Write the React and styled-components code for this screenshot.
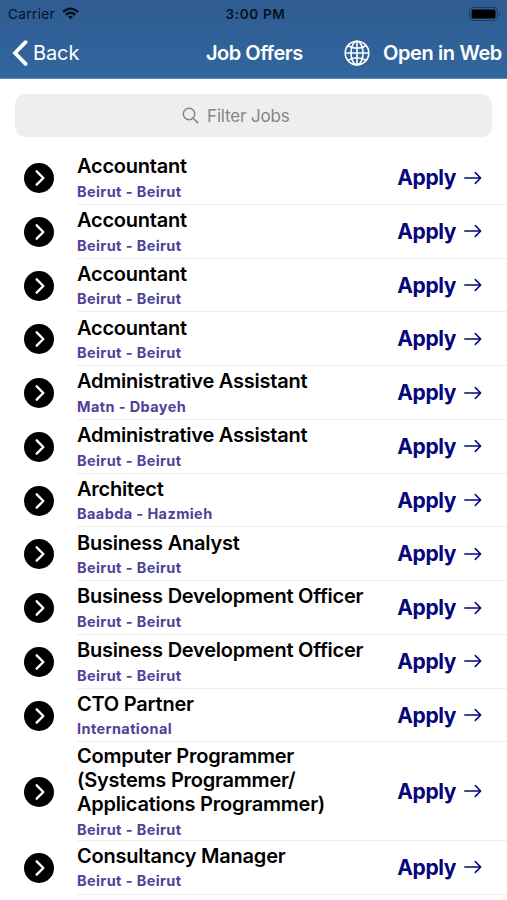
import React from 'react'
import styled, { createGlobalStyle } from 'styled-components'

const colors = {
    headerTop: '#2f5c91',
    headerBottom: '#31669f',
    navy: '#06067c',
    purple: '#50419a',
    searchGrey: '#eeeeee',
    textGrey: '#858587',
    line: '#ededee',
}

const GlobalStyle = createGlobalStyle`
    * {
        box-sizing: border-box;
    }

    body {
        margin: 0;
        overflow: hidden;
        background: #fff;
        font-family: Inter, 'Liberation Sans', sans-serif;
    }
`

const Screen = styled.div`
    width: 507px;
    height: 900px;
    overflow: hidden;
    background: #fff;
`

const HeaderComp = styled.header`
    height: 79px;
    background: linear-gradient(${colors.headerTop}, ${colors.headerBottom});
    border-bottom: 1px solid #5c8bb8;
`

const StatusBar = styled.div`
    display: grid;
    grid-template-columns: 1fr auto 1fr;
    align-items: center;
    height: 27px;
    padding: 0 6px 0 8px;
    color: #06101c;
    font-size: 13.5px;
`

const Carrier = styled.div`
    display: flex;
    align-items: center;
    gap: 7px;
    letter-spacing: 0.4px;
`

const Clock = styled.div`
    font-weight: 600;
    letter-spacing: 0.65px;
    padding-left: 2px;
`

const BatteryIcon = styled.svg`
    justify-self: end;
`

const NavBar = styled.nav`
    display: grid;
    grid-template-columns: 206px 1fr auto;
    align-items: center;
    height: 51px;
    padding-right: 5px;
    color: #fff;
    font-size: 20px;
`

const BackButton = styled.div`
    display: flex;
    align-items: center;
    gap: 5px;
    padding-left: 12px;
    letter-spacing: -0.1px;
`

const NavTitle = styled.div`
    font-weight: 600;
    letter-spacing: -0.5px;
`

const WebLink = styled.div`
    display: flex;
    align-items: center;
    gap: 13px;
    font-weight: 600;
    letter-spacing: -0.37px;
`

const SearchBar = styled.div`
    display: flex;
    align-items: center;
    gap: 8px;
    height: 43px;
    margin: 15px 15px 14.2px;
    padding-left: 167px;
    border-radius: 10px;
    background: ${colors.searchGrey};
    color: ${colors.textGrey};
    font-size: 17px;
    letter-spacing: -0.15px;
`

const JobRow = styled.div`
    display: flex;
    align-items: stretch;
    height: ${({ $tall }) => ($tall ? 98.4 : 53.75)}px;
    padding-left: 24px;
`

const ArrowBadge = styled.svg`
    flex: none;
    align-self: center;
    margin-right: 23px;
`

const RowBody = styled.div`
    display: flex;
    flex: 1;
    align-items: center;
    justify-content: space-between;
    padding-right: 25px;
    border-bottom: 1px solid ${colors.line};
`

const JobTitle = styled.div`
    color: #000;
    font-size: 20px;
    font-weight: 600;
    line-height: 24.4px;
    letter-spacing: -0.23px;
    white-space: pre-line;
`

const JobPlace = styled.div`
    margin-top: 4px;
    color: ${colors.purple};
    font-size: 14.5px;
    font-weight: 650;
    line-height: 18px;
    letter-spacing: 0.4px;
`

const ApplyLink = styled.div`
    display: flex;
    align-items: center;
    gap: 8px;
    color: ${colors.navy};
    font-size: 21px;
    font-weight: 700;
    letter-spacing: -0.4px;
`

const jobs = [
    { title: 'Accountant', place: 'Beirut - Beirut' },
    { title: 'Accountant', place: 'Beirut - Beirut' },
    { title: 'Accountant', place: 'Beirut - Beirut' },
    { title: 'Accountant', place: 'Beirut - Beirut' },
    { title: 'Administrative Assistant', place: 'Matn - Dbayeh' },
    { title: 'Administrative Assistant', place: 'Beirut - Beirut' },
    { title: 'Architect', place: 'Baabda - Hazmieh' },
    { title: 'Business Analyst', place: 'Beirut - Beirut' },
    { title: 'Business Development Officer', place: 'Beirut - Beirut' },
    { title: 'Business Development Officer', place: 'Beirut - Beirut' },
    { title: 'CTO Partner', place: 'International' },
    {
        title: 'Computer Programmer\n(Systems Programmer/\nApplications Programmer)',
        place: 'Beirut - Beirut',
        tall: true,
    },
    { title: 'Consultancy Manager', place: 'Beirut - Beirut' },
]

function Header() {
    return (
        <HeaderComp>
            <StatusBar>
                <Carrier>
                    Carrier
                    <svg width='17' height='13' viewBox='0 0 17 13' fill='none' stroke='#06101c' strokeWidth='2.3'>
                        <path d='M1 5 Q8.5 -1.8 16 5' />
                        <path d='M3.8 7.9 Q8.5 3.7 13.2 7.9' />
                        <path d='M8.5 12.2 L6 9.7 Q8.5 7.8 11 9.7 Z' fill='#06101c' stroke='none' />
                    </svg>
                </Carrier>
                <Clock>3:00 PM</Clock>
                <BatteryIcon width='32' height='14' viewBox='0 0 32 14'>
                    <rect x='0.5' y='0.5' width='28' height='13' rx='3.5' fill='none' stroke='#1d3d60' />
                    <rect x='2.5' y='2.5' width='24' height='9' rx='1.5' fill='#000' />
                    <path d='M30 5 Q32 7 30 9 Z' fill='#1d3d60' />
                </BatteryIcon>
            </StatusBar>
            <NavBar>
                <BackButton>
                    <svg width='16' height='26' viewBox='0 0 16 26' fill='none' stroke='#fff' strokeWidth='3.8'>
                        <path d='M13.6 2.2 L3 13 L13.6 23.8' strokeLinecap='round' />
                    </svg>
                    Back
                </BackButton>
                <NavTitle>Job Offers</NavTitle>
                <WebLink>
                    <svg width='26' height='26' viewBox='0 0 26 26' fill='none' stroke='#fff' strokeWidth='1.6'>
                        <circle cx='13' cy='13' r='11.8' />
                        <ellipse cx='13' cy='13' rx='6' ry='11.8' />
                        <path d='M13 1.2 V24.8 M1.2 13 H24.8 M4 5.8 Q13 10.6 22 5.8 M4 20.2 Q13 15.4 22 20.2' />
                    </svg>
                    Open in Web
                </WebLink>
            </NavBar>
        </HeaderComp>
    )
}

function JobItem({ job }) {
    return (
        <JobRow $tall={job.tall}>
            <ArrowBadge width='30' height='30' viewBox='0 0 30 30'>
                <circle cx='15' cy='15' r='15' fill='#000' />
                <path
                    d='M12.7 8.3 L19.3 15 L12.7 21.7'
                    fill='none'
                    stroke='#fff'
                    strokeWidth='2.4'
                    strokeLinecap='round'
                    strokeLinejoin='round'
                />
            </ArrowBadge>
            <RowBody>
                <div>
                    <JobTitle>{job.title}</JobTitle>
                    <JobPlace>{job.place}</JobPlace>
                </div>
                <ApplyLink>
                    Apply
                    <svg width='18' height='14' viewBox='0 0 18 14' fill='none' stroke={colors.navy} strokeWidth='1.5'>
                        <path d='M0.8 7 H16.6 M11.3 1.6 L16.7 7 L11.3 12.4' strokeLinecap='round' strokeLinejoin='round' />
                    </svg>
                </ApplyLink>
            </RowBody>
        </JobRow>
    )
}

function App() {
    return (
        <Screen>
            <GlobalStyle />
            <Header />
            <SearchBar>
                <svg width='17' height='17' viewBox='0 0 17 17' fill='none' stroke={colors.textGrey} strokeWidth='1.5'>
                    <circle cx='7' cy='7' r='5.7' />
                    <path d='M11.2 11.2 L15.6 15.6' strokeLinecap='round' />
                </svg>
                Filter Jobs
            </SearchBar>
            {jobs.map((job, key) => <JobItem key={key} job={job} />)}
        </Screen>
    )
}

export default App
